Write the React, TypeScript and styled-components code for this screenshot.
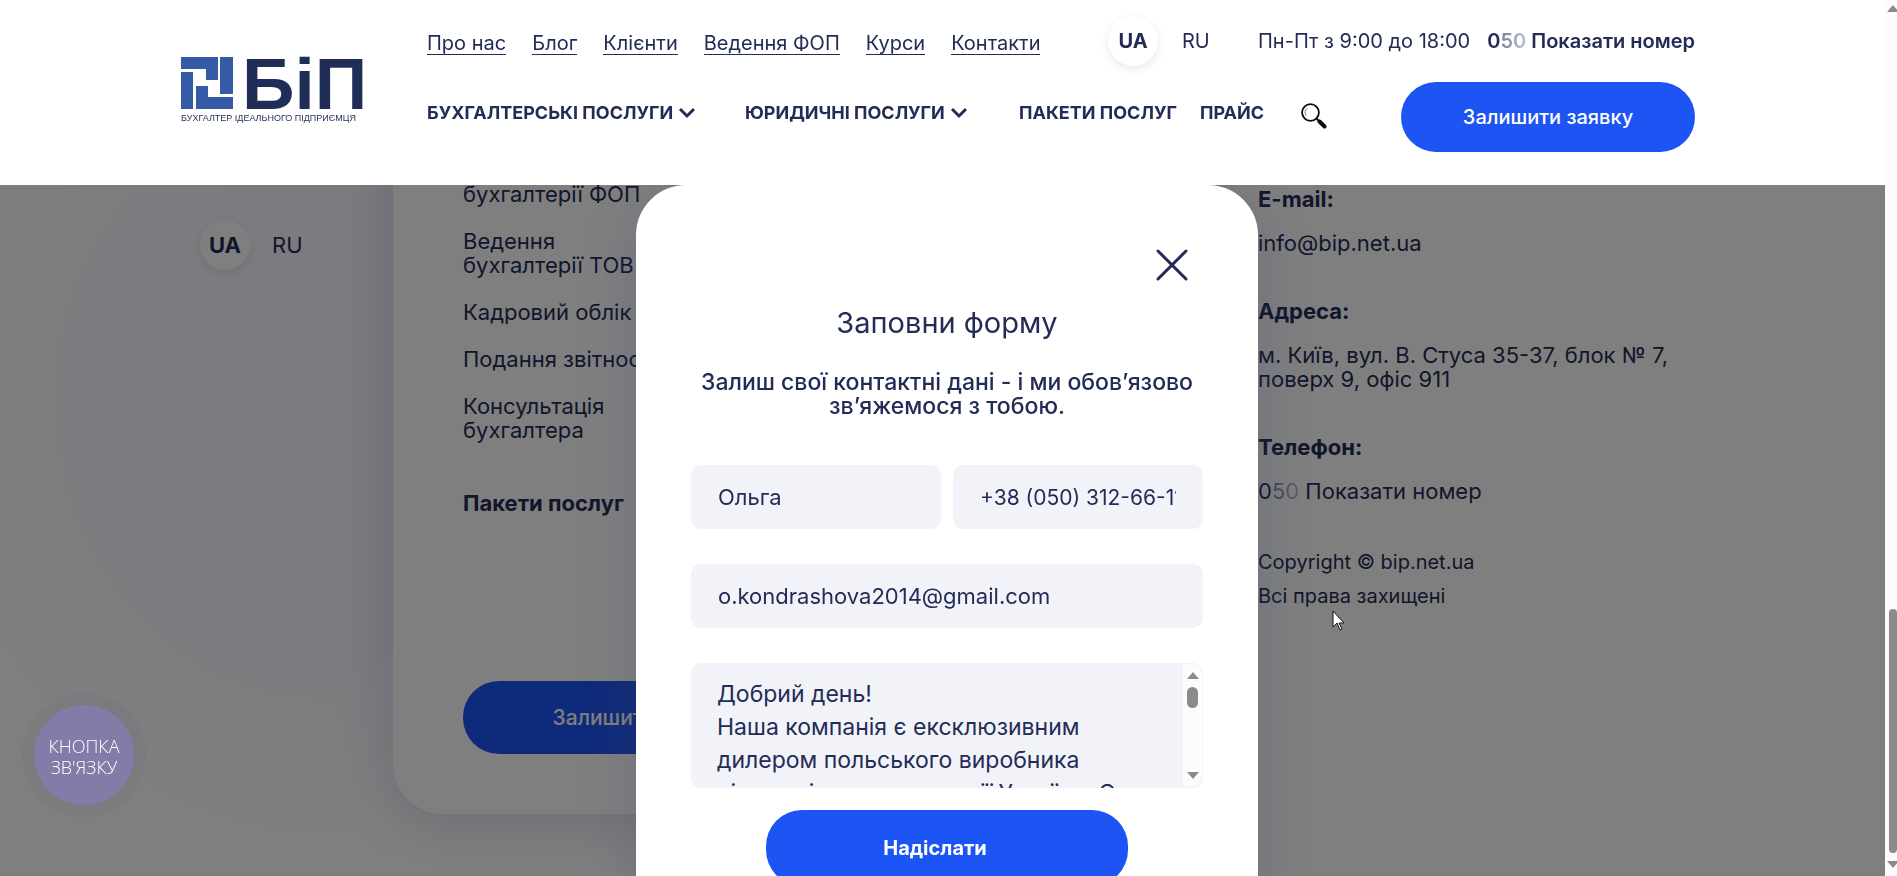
import React from "react";
import styled, { createGlobalStyle, css } from "styled-components";

const navy = "#232c56";
const blue = "#1d54f4";
const sans = `Inter, "Noto Sans", "Liberation Sans", sans-serif`;

const GlobalStyle = createGlobalStyle`
  *, *::before, *::after { box-sizing: border-box; }
  body {
    margin: 0;
    overflow: hidden;
    background: #fff;
    color: ${navy};
    font-family: ${sans};
    font-size: 22px;
    line-height: 24px;
  }
  a { color: inherit; text-decoration: none; }
  button, input, textarea { font-family: inherit; color: inherit; }
  ul { list-style: none; margin: 0; padding: 0; }
`;

const Page = styled.div`
  height: 100vh;
  overflow: hidden;
  padding-right: 12px;
`;

/* ---------- header ---------- */

const Header = styled.header`
  position: fixed;
  inset: 0 12px auto 0;
  z-index: 30;
  height: 185px;
  padding: 0 190px 0 181px;
  display: grid;
  grid-template-columns: 180px minmax(0, 1fr);
  column-gap: 66px;
  background: #fff;
`;

const LogoLink = styled.a`
  display: block;
  margin-top: 54px;
`;

const HeaderRows = styled.div`
  display: flex;
  flex-direction: column;
`;

const TopRow = styled.div`
  display: grid;
  grid-template-columns: minmax(0, 1fr) 150px 437px;
  align-items: center;
  height: 82px;
  font-size: 20px;
`;

const TopNav = styled.nav`
  display: flex;
  gap: 26px;
  padding-top: 4px;
  white-space: nowrap;
`;

const TopLink = styled.a`
  border-bottom: 1px solid ${navy};
  line-height: 22px;
`;

const Langs = styled.div`
  display: flex;
  align-items: center;
  gap: 24px;
`;

const LangCurrent = styled.a`
  display: flex;
  align-items: center;
  justify-content: center;
  width: 50px;
  height: 50px;
  border-radius: 50%;
  background: #fff;
  box-shadow: 0 3px 9px rgba(40, 40, 80, 0.1);
  font-weight: 700;
`;

const Contacts = styled.div`
  display: flex;
  justify-content: space-between;
  white-space: nowrap;
`;

const Phone = styled.a<{ $bold?: boolean }>`
  font-weight: ${(p) => (p.$bold ? 600 : 400)};
`;

const Faded = styled.span`
  background: linear-gradient(90deg, #757b97, #bfc2d0);
  background-clip: text;
  color: transparent;
`;

const MenuRow = styled.div`
  display: grid;
  grid-template-columns: minmax(0, 1fr) 294px;
`;

const Menu = styled.nav`
  display: grid;
  grid-template-columns: 318px 274px 181px 101px 40px;
  align-items: center;
  height: 62px;
  font-size: 18px;
  font-weight: 700;
  white-space: nowrap;
`;

const MenuLink = styled.a`
  display: flex;
  align-items: center;
  gap: 5px;
`;

const IconButton = styled.button`
  display: block;
  justify-self: start;
  padding: 0;
  border: 0;
  background: none;
  line-height: 0;
  cursor: pointer;
`;

const SearchButton = styled(IconButton)`
  padding-top: 5px;
`;

const Pill = styled.button<{ $h: number; $weight?: number }>`
  height: ${(p) => p.$h}px;
  border: 0;
  border-radius: 36px;
  background: ${blue};
  color: #fff;
  font-size: 20px;
  font-weight: ${(p) => p.$weight ?? 500};
  cursor: pointer;
`;

/* ---------- footer behind the dialog ---------- */

const Footer = styled.footer`
  display: grid;
  grid-template-columns: 193px minmax(0, 1fr) 437px;
  height: 100%;
  padding: 0 190px 62px 200px;
  background: radial-gradient(ellipse 420px 460px at 330px 400px, #f8f5fd 0, #f8f6fe 55%, #fff 100%);
`;

const FooterLangs = styled(Langs)`
  align-self: start;
  gap: 22px;
  margin-top: 220px;
`;

const ServiceCard = styled.section`
  display: flex;
  flex-direction: column;
  align-items: flex-start;
  margin-right: 66px;
  padding: 158px 70px 60px;
  border-radius: 0 0 50px 50px;
  background: #fff;
  box-shadow: 0 10px 55px rgba(60, 40, 110, 0.18);
`;

const ServiceList = styled.ul`
  display: flex;
  flex-direction: column;
  gap: 23px;
  width: 210px;
`;

const CardHeading = styled.h3`
  margin: 49px 0 auto;
  font-size: 22px;
  font-weight: 700;
`;

const CardPill = styled(Pill)`
  width: 358px;
  font-size: 21px;
`;

const Info = styled.address`
  padding-top: 187px;
  font-style: normal;
`;

const InfoTitle = styled.h3`
  margin: 0 0 20px;
  font-size: 22px;
  line-height: 24px;
  font-weight: 700;
`;

const InfoText = styled.p`
  margin: 0 0 44px;
`;

const Legal = styled.div`
  display: grid;
  gap: 10px;
  padding-top: 3px;
  font-size: 20px;
`;

/* ---------- dialog ---------- */

const Backdrop = styled.div`
  position: fixed;
  inset: 0 12px 0 0;
  z-index: 10;
  display: flex;
  justify-content: center;
  align-items: flex-start;
  padding: 185px 0 0 9px;
  overflow: hidden;
  background: rgba(0, 0, 0, 0.5);
`;

const Dialog = styled.section`
  width: 622px;
  padding: 64px 55px 60px;
  border-radius: 50px;
  background: #fff;
  box-shadow: 0 10px 60px rgba(60, 70, 110, 0.25);
`;

const CloseRow = styled.div`
  display: flex;
  justify-content: flex-end;
  padding-right: 15px;
`;

const DialogTitle = styled.h2`
  margin: 26px 0 0;
  font-size: 29px;
  line-height: 32px;
  font-weight: 400;
  text-align: center;
`;

const DialogLead = styled.p`
  margin: 31px 0 47px;
  font-size: 23px;
  font-weight: 500;
  text-align: center;
`;

const Form = styled.form`
  display: grid;
  grid-template-columns: 1fr 1fr;
  gap: 35px 12px;
`;

const fieldBox = css`
  width: 100%;
  border: 0;
  outline: 0;
  border-radius: 10px;
  background: #f2f3f8;
`;

const Field = styled.label<{ $wide?: boolean }>`
  position: relative;
  display: block;
  min-width: 0;
  grid-column: ${(p) => (p.$wide ? "1 / -1" : "auto")};
`;

const Input = styled.input`
  ${fieldBox}
  display: block;
  height: 64px;
  padding: 0 27px;
  font-size: 22px;

  &[type="tel"] {
    font-size: 21px;
  }
`;

const Message = styled.textarea`
  ${fieldBox}
  display: block;
  height: 125px;
  padding: 15px 40px 0 26px;
  font-size: 23px;
  line-height: 33px;
  resize: none;
  scrollbar-width: none;
`;

const Submit = styled(Pill)`
  grid-column: 1 / -1;
  justify-self: center;
  width: 362px;
  margin-top: -13px;
  padding-right: 30px;
`;

const Track = styled.span`
  position: absolute;
  inset: 1px 1px 1px auto;
  width: 19px;
  border-radius: 0 10px 10px 0;
  background: #fcfcfc;
  display: flex;
  flex-direction: column;
  align-items: center;
  padding: 8px 0;
`;

const PageTrack = styled.div`
  position: fixed;
  inset: 0 -3px 0 auto;
  z-index: 40;
  width: 15px;
  background: #fcfcfc;
  display: flex;
  flex-direction: column;
  align-items: center;
  padding: 5px 0 8px;
`;

const Arrow = styled.i<{ $down?: boolean }>`
  width: 0;
  height: 0;
  border: 6px solid transparent;
  ${(p) =>
    p.$down
      ? "border-width: 7px 6px 0; border-top-color: #8b8b8b;"
      : "border-width: 0 6px 7px; border-bottom-color: #8b8b8b;"}
`;

const Thumb = styled.i<{ $h: number; $w: number }>`
  width: ${(p) => p.$w}px;
  height: ${(p) => p.$h}px;
  margin: ${(p) => (p.$h > 100 ? "auto 0 8px" : "8px 0 auto")};
  border-radius: 6px;
  background: #8b8b8b;
`;

/* ---------- floating items ---------- */

const CallButton = styled.button`
  position: fixed;
  left: 22px;
  bottom: 59px;
  z-index: 20;
  width: 124px;
  height: 124px;
  padding: 4px 0 0;
  border: 12px solid rgba(104, 96, 120, 0.14);
  border-radius: 50%;
  background: #857ba8;
  background-clip: padding-box;
  color: #fff;
  font-family: "Open Sans", "Noto Sans", sans-serif;
  font-size: 18px;
  line-height: 21px;
  font-weight: 300;
`;

const Cursor = styled.svg`
  position: fixed;
  left: 1332px;
  top: 610px;
  z-index: 50;
`;

const Logo = () => (
  <svg width="184" height="72" viewBox="0 0 184 72" overflow="visible" role="img" aria-label="БІП">
    <g fill="#355aa6">
      <path d="M0 3h37v23H25V15H0z" />
      <path d="M39 3h13v37H39z" />
      <path d="M0 18h12v37H0z" />
      <path d="M15 32h12v11h25v12H15z" />
    </g>
    <text x="61" y="55" fontFamily='"Liberation Sans", sans-serif' fontWeight="700" fontSize="73" fill="#1f2d57">
      БіП
    </text>
    <text x="0" y="67" fontFamily='"Liberation Sans", sans-serif' fontSize="9" fill="#1f2d57">
      БУХГАЛТЕР ІДЕАЛЬНОГО ПІДПРИЄМЦЯ
    </text>
  </svg>
);

const Chevron = () => (
  <svg width="18" height="12" viewBox="0 0 18 12" aria-hidden="true">
    <path d="M2 2l7 7 7-7" fill="none" stroke={navy} strokeWidth="3" />
  </svg>
);

const SearchIcon = () => (
  <svg width="26" height="26" viewBox="0 0 26 26" aria-hidden="true">
    <circle cx="9.5" cy="9.5" r="8.4" fill="none" stroke="#0a0a0a" strokeWidth="1.8" />
    <path d="M5 12.500a5.500 5.500 0 0 1 1.500-7.500" fill="none" stroke="#777" strokeWidth="1" />
    <path d="M15.500 15.500l2.500 2.500" stroke="#0a0a0a" strokeWidth="2" />
    <path d="M18.500 18.500l5 5" stroke="#0a0a0a" strokeWidth="4" strokeLinecap="round" />
  </svg>
);

const CloseIcon = () => (
  <svg width="32" height="32" viewBox="0 0 32 32" aria-hidden="true">
    <path d="M2 2l28 28M30 2L2 30" stroke={navy} strokeWidth="3" strokeLinecap="round" />
  </svg>
);

const topLinks = ["Про нас", "Блог", "Клієнти", "Ведення ФОП", "Курси", "Контакти"];

const menu = [
  { label: "БУХГАЛТЕРСЬКІ ПОСЛУГИ", nested: true },
  { label: "ЮРИДИЧНІ ПОСЛУГИ", nested: true },
  { label: "ПАКЕТИ ПОСЛУГ", nested: false },
  { label: "ПРАЙС", nested: false },
];

const services = [
  "Ведення бухгалтерії ФОП",
  "Ведення бухгалтерії ТОВ",
  "Кадровий облік",
  "Подання звітності",
  "Консультація бухгалтера",
];

const messageText =
  "Добрий день!\nНаша компанія є ексклюзивним\nдилером польського виробника\nпічних сіток на території України. Є";

const PhoneNumber = ({ bold }: { bold?: boolean }) => (
  <Phone href="#phone" $bold={bold}>
    0<Faded>50</Faded> Показати номер
  </Phone>
);

export default function App() {
  return (
    <Page>
      <GlobalStyle />
      <Header>
        <LogoLink href="#home">
          <Logo />
        </LogoLink>
        <HeaderRows>
          <TopRow>
            <TopNav>
              {topLinks.map((label) => (
                <TopLink key={label} href="#page">
                  {label}
                </TopLink>
              ))}
            </TopNav>
            <Langs>
              <LangCurrent href="#ua">UA</LangCurrent>
              <a href="#ru">RU</a>
            </Langs>
            <Contacts>
              <span>Пн-Пт з 9:00 до 18:00</span>
              <PhoneNumber bold />
            </Contacts>
          </TopRow>
          <MenuRow>
            <Menu>
              {menu.map((item) => (
                <MenuLink key={item.label} href="#services">
                  {item.label}
                  {item.nested && <Chevron />}
                </MenuLink>
              ))}
              <SearchButton type="button" aria-label="Пошук">
                <SearchIcon />
              </SearchButton>
            </Menu>
            <Pill type="button" $h={70}>
              Залишити заявку
            </Pill>
          </MenuRow>
        </HeaderRows>
      </Header>

      <Footer>
        <FooterLangs>
          <LangCurrent href="#ua">UA</LangCurrent>
          <a href="#ru">RU</a>
        </FooterLangs>
        <ServiceCard>
          <ServiceList>
            {services.map((name) => (
              <li key={name}>
                <a href="#service">{name}</a>
              </li>
            ))}
          </ServiceList>
          <CardHeading>Пакети послуг</CardHeading>
          <CardPill type="button" $h={73}>
            Залишити заявку
          </CardPill>
        </ServiceCard>
        <Info>
          <InfoTitle>E-mail:</InfoTitle>
          <InfoText>
            <a href="#mail">info@bip.net.ua</a>
          </InfoText>
          <InfoTitle>Адреса:</InfoTitle>
          <InfoText>
            м. Київ, вул. В. Стуса 35-37, блок № 7,
            <br />
            поверх 9, офіс 911
          </InfoText>
          <InfoTitle>Телефон:</InfoTitle>
          <InfoText>
            <PhoneNumber />
          </InfoText>
          <Legal>
            <span>Copyright © bip.net.ua</span>
            <span>Всі права захищені</span>
          </Legal>
        </Info>
      </Footer>

      <Backdrop>
        <Dialog role="dialog" aria-labelledby="dialog-title">
          <CloseRow>
            <IconButton type="button" aria-label="Закрити">
              <CloseIcon />
            </IconButton>
          </CloseRow>
          <DialogTitle id="dialog-title">Заповни форму</DialogTitle>
          <DialogLead>
            Залиш свої контактні дані - і ми обов’язово
            <br />
            зв’яжемося з тобою.
          </DialogLead>
          <Form>
            <Field>
              <Input aria-label="Ім’я" defaultValue="Ольга" />
            </Field>
            <Field>
              <Input aria-label="Телефон" type="tel" defaultValue="+38 (050) 312-66-11" />
            </Field>
            <Field $wide>
              <Input aria-label="E-mail" type="email" defaultValue="o.kondrashova2014@gmail.com" />
            </Field>
            <Field $wide>
              <Message aria-label="Повідомлення" defaultValue={messageText} />
              <Track aria-hidden="true">
                <Arrow />
                <Thumb $h={21} $w={11} />
                <Arrow $down />
              </Track>
            </Field>
            <Submit type="submit" $h={76} $weight={700}>
              Надіслати
            </Submit>
          </Form>
        </Dialog>
      </Backdrop>

      <CallButton type="button">
        КНОПКА
        <br />
        ЗВ'ЯЗКУ
      </CallButton>

      <PageTrack aria-hidden="true">
        <Arrow />
        <Thumb $h={244} $w={8} />
        <Arrow $down />
      </PageTrack>

      <Cursor width="13" height="21" viewBox="0 0 13 21" aria-hidden="true">
        <path d="M1 1v16l4-4 3 7 2-1-3-6h5z" fill="#fff" stroke="#111" />
      </Cursor>
    </Page>
  );
}
